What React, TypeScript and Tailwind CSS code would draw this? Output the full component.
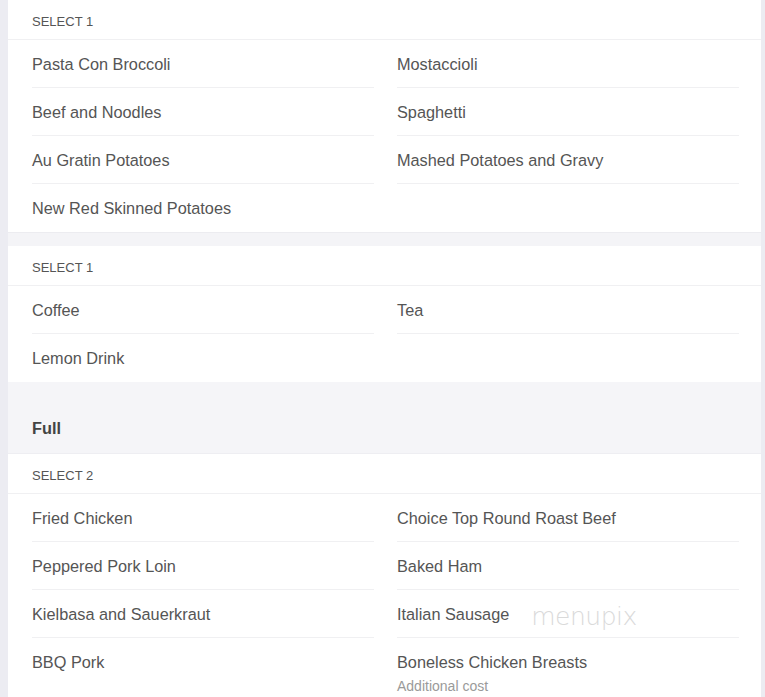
import React from "react";

type Item = { name: string; note?: string };

const sides: Item[] = [
  { name: "Pasta Con Broccoli" },
  { name: "Mostaccioli" },
  { name: "Beef and Noodles" },
  { name: "Spaghetti" },
  { name: "Au Gratin Potatoes" },
  { name: "Mashed Potatoes and Gravy" },
  { name: "New Red Skinned Potatoes" },
];

const drinks: Item[] = [{ name: "Coffee" }, { name: "Tea" }, { name: "Lemon Drink" }];

const mains: Item[] = [
  { name: "Fried Chicken" },
  { name: "Choice Top Round Roast Beef" },
  { name: "Peppered Pork Loin" },
  { name: "Baked Ham" },
  { name: "Kielbasa and Sauerkraut" },
  { name: "Italian Sausage" },
  { name: "BBQ Pork" },
  { name: "Boneless Chicken Breasts", note: "Additional cost" },
];

function Group({ label, items }: { label: string; items: Item[] }) {
  const rows = Math.ceil(items.length / 2);
  return (
    <div className="bg-white">
      <div className="h-10 flex items-center pt-[4px] px-6 border-b border-[#f0f0f2] text-[13px] text-[#555] uppercase">
        {label}
      </div>
      <div className="grid grid-cols-[342px_342px] gap-x-[23px] pl-6">
        {items.map((item, i) => {
          const row = Math.floor(i / 2);
          const last = row === rows - 1;
          return (
            <div
              key={item.name}
              className={"min-h-12 pt-[14px] " + (last ? "pb-[14px]" : "pb-[13px] border-b border-[#f0f0f2]")}
            >
              <div className="text-[16.3px] text-[#555] leading-5">
                <span className="relative">
                  {item.name}
                  {item.name === "Italian Sausage" && (
                    <span
                      className="absolute left-[calc(100%+22px)] -top-[1px] text-[25px] text-[#dadada] leading-none tracking-[-0.5px]"
                      style={{ fontFamily: "'DejaVu Sans', sans-serif", fontWeight: 200 }}
                    >
                      menupix
                    </span>
                  )}
                </span>
              </div>
              {item.note && <div className="text-sm text-[#9a9a9a] mt-[6px] leading-4">{item.note}</div>}
            </div>
          );
        })}
      </div>
    </div>
  );
}

export default function App() {
  return (
    <div
      className="w-[765px] h-[697px] overflow-hidden bg-[#ececf2] pl-2 pr-1"
      style={{ fontFamily: "'Liberation Sans', Arial, sans-serif" }}
    >
      <div className="w-[753px]">
        <Group label="Select 1" items={sides} />
        <div className="h-[14px] bg-[#f4f4f7] border-t border-[#ececf0]" />
        <Group label="Select 1" items={drinks} />
        <div className="h-[72px] bg-[#f5f5f8] flex items-end pb-[15px] px-6 border-b border-[#eeeef2]">
          <span className="text-[16.3px] font-bold text-[#444] leading-5">Full</span>
        </div>
        <Group label="Select 2" items={mains} />
      </div>
    </div>
  );
}
